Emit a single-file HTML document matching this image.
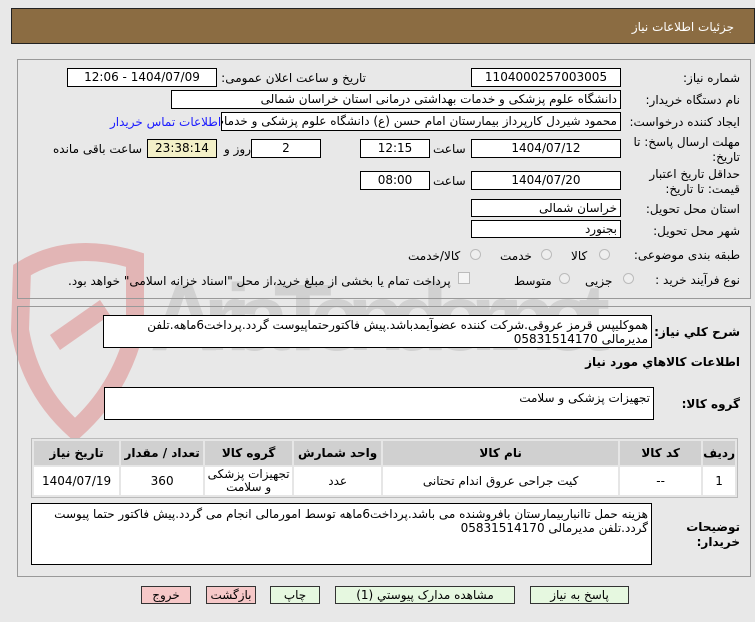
<!DOCTYPE html>
<html><head><meta charset="utf-8"><style>
*{margin:0;padding:0;box-sizing:border-box}
body{width:755px;height:622px;background:#e8e8e8;font-family:Tahoma,"DejaVu Sans","Liberation Sans",sans-serif;font-size:12px;color:#000;position:relative;overflow:hidden}
.a{position:absolute}
.hdr{left:11px;top:8px;width:744px;height:36px;background:#8b6c42;border:1px solid #222}
.hdr span{position:absolute;right:20px;top:11px;color:#fff;font-size:12px}
.panel{border:1px solid #999;background:transparent}
.box{position:absolute;background:#fff;border:1px solid #000;text-align:center;line-height:16px;direction:rtl;white-space:nowrap;overflow:hidden}
.lbl{position:absolute;direction:rtl;white-space:nowrap}
.r{text-align:right;padding-right:3px}
.rad{position:absolute;width:11px;height:11px;border-radius:50%;border:1px solid #bbb;background:#eee}
table{border-collapse:separate;border-spacing:2px}
td,th{background:#fff;text-align:center;font-size:12px}
th{background:#d0d0d0;font-weight:bold;height:24px}
.btn{position:absolute;border:1px solid #333;text-align:center;line-height:16px;font-size:12px;height:18px}
</style></head><body>
<svg class="a" style="left:0;top:240px" width="620" height="200" viewBox="0 0 620 200">
<path d="M22 30 Q70 0 135 20 L135 90 Q120 150 75 190 Q30 150 20 90 Z" fill="none" stroke="#e2b5b5" stroke-width="18"/>
<path d="M50 95 L100 60 L110 75 L60 110 Z" fill="#e2b5b5"/>
<text x="150" y="110" font-family="Liberation Sans,sans-serif" font-size="95" font-weight="bold" fill="#c8c8c8" opacity="0.7" textLength="460">AriaTender.net</text>
</svg>
<div class="a hdr"><span>جزئیات اطلاعات نیاز</span></div>
<div class="a panel" style="left:17px;top:59px;width:734px;height:240px"></div>
<div class="a panel" style="left:17px;top:306px;width:734px;height:271px"></div>

<div class="lbl" style="right:15px;top:71px">شماره نیاز:</div>
<div class="box" style="left:471px;top:68px;width:150px;height:19px">1104000257003005</div>
<div class="lbl" style="right:389px;top:71px">تاریخ و ساعت اعلان عمومی:</div>
<div class="box" style="left:67px;top:68px;width:150px;height:19px">1404/07/09 - 12:06</div>

<div class="lbl" style="right:15px;top:93px">نام دستگاه خریدار:</div>
<div class="box r" style="left:171px;top:90px;width:450px;height:19px">دانشگاه علوم پزشکی و خدمات بهداشتی درمانی استان خراسان شمالی</div>

<div class="lbl" style="right:15px;top:115px">ایجاد کننده درخواست:</div>
<div class="box r" style="left:221px;top:112px;width:400px;height:19px">محمود شیردل کارپرداز بیمارستان امام حسن (ع) دانشگاه علوم پزشکی و خدمات</div>
<div class="lbl" style="left:110px;top:115px;color:#1a1aff">اطلاعات تماس خریدار</div>

<div class="lbl" style="right:15px;top:135px;line-height:15px;text-align:right">مهلت ارسال پاسخ: تا<br>تاریخ:</div>
<div class="box" style="left:471px;top:139px;width:150px;height:19px">1404/07/12</div>
<div class="lbl" style="left:433px;top:142px">ساعت</div>
<div class="box" style="left:360px;top:139px;width:70px;height:19px">12:15</div>
<div class="box" style="left:251px;top:139px;width:70px;height:19px">2</div>
<div class="lbl" style="left:224px;top:142px">روز و</div>
<div class="box" style="left:147px;top:139px;width:70px;height:19px;background:#f3f0c8">23:38:14</div>
<div class="lbl" style="left:53px;top:142px">ساعت باقی مانده</div>

<div class="lbl" style="right:15px;top:167px;line-height:15px;text-align:right">حداقل تاریخ اعتبار<br>قیمت: تا تاریخ:</div>
<div class="box" style="left:471px;top:171px;width:150px;height:19px">1404/07/20</div>
<div class="lbl" style="left:433px;top:174px">ساعت</div>
<div class="box" style="left:360px;top:171px;width:70px;height:19px">08:00</div>

<div class="lbl" style="right:15px;top:202px">استان محل تحویل:</div>
<div class="box r" style="left:471px;top:199px;width:150px;height:18px">خراسان شمالی</div>
<div class="lbl" style="right:15px;top:224px">شهر محل تحویل:</div>
<div class="box r" style="left:471px;top:220px;width:150px;height:18px">بجنورد</div>

<div class="lbl" style="right:15px;top:248px">طبقه بندی موضوعی:</div>
<div class="rad" style="left:599px;top:249px"></div><div class="lbl" style="left:571px;top:249px">کالا</div>
<div class="rad" style="left:541px;top:249px"></div><div class="lbl" style="left:500px;top:249px">خدمت</div>
<div class="rad" style="left:470px;top:249px"></div><div class="lbl" style="left:408px;top:249px">کالا/خدمت</div>

<div class="lbl" style="right:15px;top:273px">نوع فرآیند خرید :</div>
<div class="rad" style="left:623px;top:273px"></div><div class="lbl" style="left:585px;top:274px">جزیی</div>
<div class="rad" style="left:559px;top:273px"></div><div class="lbl" style="left:514px;top:274px">متوسط</div>
<div class="a" style="left:458px;top:272px;width:12px;height:12px;border:1px solid #bbb;background:#f4f4f4"></div>
<div class="lbl" style="left:68px;top:274px">پرداخت تمام یا بخشی از مبلغ خرید،از محل "اسناد خزانه اسلامی" خواهد بود.</div>

<div class="lbl" style="right:15px;top:325px;font-weight:bold">شرح کلي نياز:</div>
<div class="box" style="left:103px;top:315px;width:549px;height:33px;text-align:right;white-space:normal;line-height:14px;padding:2px 3px;background:#fff">هموکلیپس قرمز عروقی.شرکت کننده عضوآیمدباشد.پیش فاکتورحتماپیوست گردد.پرداخت6ماهه.تلفن مدیرمالی 05831514170</div>
<div class="lbl" style="right:15px;top:355px;font-weight:bold">اطلاعات کالاهاي مورد نياز</div>
<div class="lbl" style="right:15px;top:397px;font-weight:bold">گروه کالا:</div>
<div class="box" style="left:104px;top:387px;width:550px;height:33px;text-align:right;padding:2px 3px">تجهیزات پزشکی و سلامت</div>

<div class="a" style="left:31px;top:438px;width:707px;height:60px;border:1px solid #bbb;background:#e6e6e6;direction:rtl">
<table style="width:705px">
<tr><th style="width:26px">ردیف</th><th style="width:81px">کد کالا</th><th style="width:235px">نام کالا</th><th style="width:87px">واحد شمارش</th><th style="width:87px">گروه کالا</th><th style="width:82px">تعداد / مقدار</th><th>تاریخ نیاز</th></tr>
<tr style="height:28px"><td>1</td><td>--</td><td>کیت جراحی عروق اندام تحتانی</td><td>عدد</td><td style="line-height:13px">تجهیزات پزشکی و سلامت</td><td>360</td><td>1404/07/19</td></tr>
</table></div>

<div class="lbl" style="right:15px;top:520px;font-weight:bold;line-height:15px;text-align:right">توضیحات<br>خریدار:</div>
<div class="box" style="left:31px;top:503px;width:621px;height:62px;text-align:right;white-space:normal;line-height:14px;padding:3px 3px">هزینه حمل تاانباربیمارستان بافروشنده می باشد.پرداخت6ماهه توسط امورمالی انجام می گردد.پیش فاکتور حتما پیوست گردد.تلفن مدیرمالی 05831514170</div>

<div class="btn" style="left:141px;top:586px;width:50px;background:#f6c8c8">خروج</div>
<div class="btn" style="left:206px;top:586px;width:50px;background:#f6c8c8">بازگشت</div>
<div class="btn" style="left:270px;top:586px;width:50px;background:#e6f8e0">چاپ</div>
<div class="btn" style="left:335px;top:586px;width:180px;background:#e6f8e0">مشاهده مدارک پیوستي (1)</div>
<div class="btn" style="left:530px;top:586px;width:99px;background:#e6f8e0">پاسخ به نیاز</div>
</body></html>
